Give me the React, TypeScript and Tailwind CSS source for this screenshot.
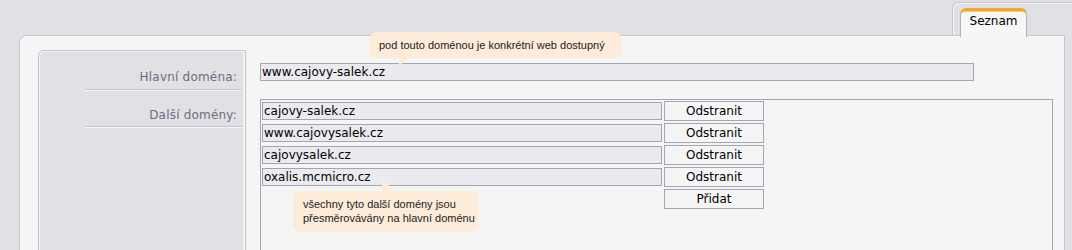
import React from 'react';

const otherDomains = ['cajovy-salek.cz', 'www.cajovysalek.cz', 'cajovysalek.cz', 'oxalis.mcmicro.cz'];

const Tip = ({ children, className }: { children: React.ReactNode; className: string }) => (
  <div
    className={`absolute z-20 rounded-[8px] bg-[#fcecd9] px-[10px] whitespace-nowrap text-[11px] leading-[14px] text-[#222] font-['Liberation_Sans',Arial,sans-serif] ${className}`}
  >
    {children}
  </div>
);

const App = () => {
  return (
    <div className="w-[1072px] h-[250px] overflow-hidden bg-[#e1e0e5] font-['DejaVu_Sans',Verdana,sans-serif] text-[12px] text-black">
      {/* tab strip */}
      <div className="flex h-[35px] pl-[952px] pt-[2px]">
        <div className="flex-1 h-[33px] border-l border-t border-[#c9c8d7] rounded-tl-[6px] shadow-[inset_1px_1px_0_#f3f3f6] pl-[7px] pt-[5px]">
          <div className="relative z-10 w-[67px] h-[29px] rounded-t-[6px] border-x border-[#b3b2c3] border-t-[3px] border-t-[#f2a43a] bg-[#f6f6f6] shadow-[inset_0_1px_0_#ffc95a] text-center leading-[16px] pt-[2px]">
            Seznam
          </div>
        </div>
      </div>

      {/* panel */}
      <div className="ml-[19px] w-[1046px] h-[230px] rounded-tl-[8px] border border-[#c4c3d3] bg-[#f5f5f5] shadow-[inset_1px_1px_0_#fbfbfc] pl-[18px] pt-[14px] flex">
        {/* labels */}
        <div className="w-[208px] h-[240px] shrink-0 rounded-tl-[6px] border border-[#c4c3d3] bg-[#e1e0e5] shadow-[inset_1px_1px_0_#f3f3f6,inset_-2px_0_0_#f3f3f6] text-[#6e6d80]">
          <div className="pt-[18px]">
            <div className="h-[16px] leading-[16px] text-right pr-[8px] tracking-[0.2px]">Hlavní doména:</div>
            <div className="ml-[46px] mr-[3px] mt-[4px] h-[2px] border-t border-[#c4c3d3] border-b border-b-[#f6f6f8]" />
          </div>
          <div className="pt-[16px]">
            <div className="h-[16px] leading-[16px] text-right pr-[8px] tracking-[0.2px]">Další domény:</div>
            <div className="ml-[46px] mr-[3px] mt-[3px] h-[2px] border-t border-[#c4c3d3] border-b border-b-[#f6f6f8]" />
          </div>
        </div>

        {/* fields */}
        <div className="ml-[14px] pt-[13px]">
          <div className="relative">
            <div className="w-[714px] h-[18px] border border-[#a5a4b4] bg-[#ebeaef] pl-[1px] leading-[16px]">
              www.cajovy-salek.cz
            </div>
            <Tip className="left-[109px] top-[-31px] w-[253px] h-[26px] pt-[6px]">
              pod touto doménou je konkrétní web dostupný
              <svg className="absolute left-[30px] top-[25px]" width="12" height="9" viewBox="0 0 12 9">
                <path d="M0 0 L11 0 L1 8 L0 8 Z" fill="#fcecd9" />
              </svg>
            </Tip>
          </div>

          <div className="relative mt-[18px] w-[793px] h-[160px] border border-[#a5a4b4] pl-[1px] pt-[1px] flex flex-col gap-[2px]">
            {otherDomains.map((d) => (
              <div key={d} className="flex items-center h-[20px] gap-[2px]">
                <div className="w-[400px] h-[18px] border border-[#a5a4b4] bg-[#ebeaef] pl-[1px] leading-[16px]">{d}</div>
                <button className="w-[100px] h-[20px] border border-[#a5a4b4] bg-[#f5f5f5] leading-[18px] text-center">
                  Odstranit
                </button>
              </div>
            ))}
            <div className="flex items-center h-[20px] pl-[402px]">
              <button className="w-[100px] h-[20px] border border-[#a5a4b4] bg-[#f5f5f5] leading-[18px] text-center">
                Přidat
              </button>
            </div>

            <Tip className="left-[32px] top-[91px] w-[186px] h-[41px] pt-[6px]">
              všechny tyto další domény jsou
              <br />
              přesměrovávány na hlavní doménu
              <svg className="absolute left-[89px] top-[-13px]" width="13" height="14" viewBox="0 0 13 14">
                <path d="M0 0 L13 14 L0 14 Z" fill="#fcecd9" />
              </svg>
            </Tip>
          </div>
        </div>
      </div>
    </div>
  );
};

export default App;
